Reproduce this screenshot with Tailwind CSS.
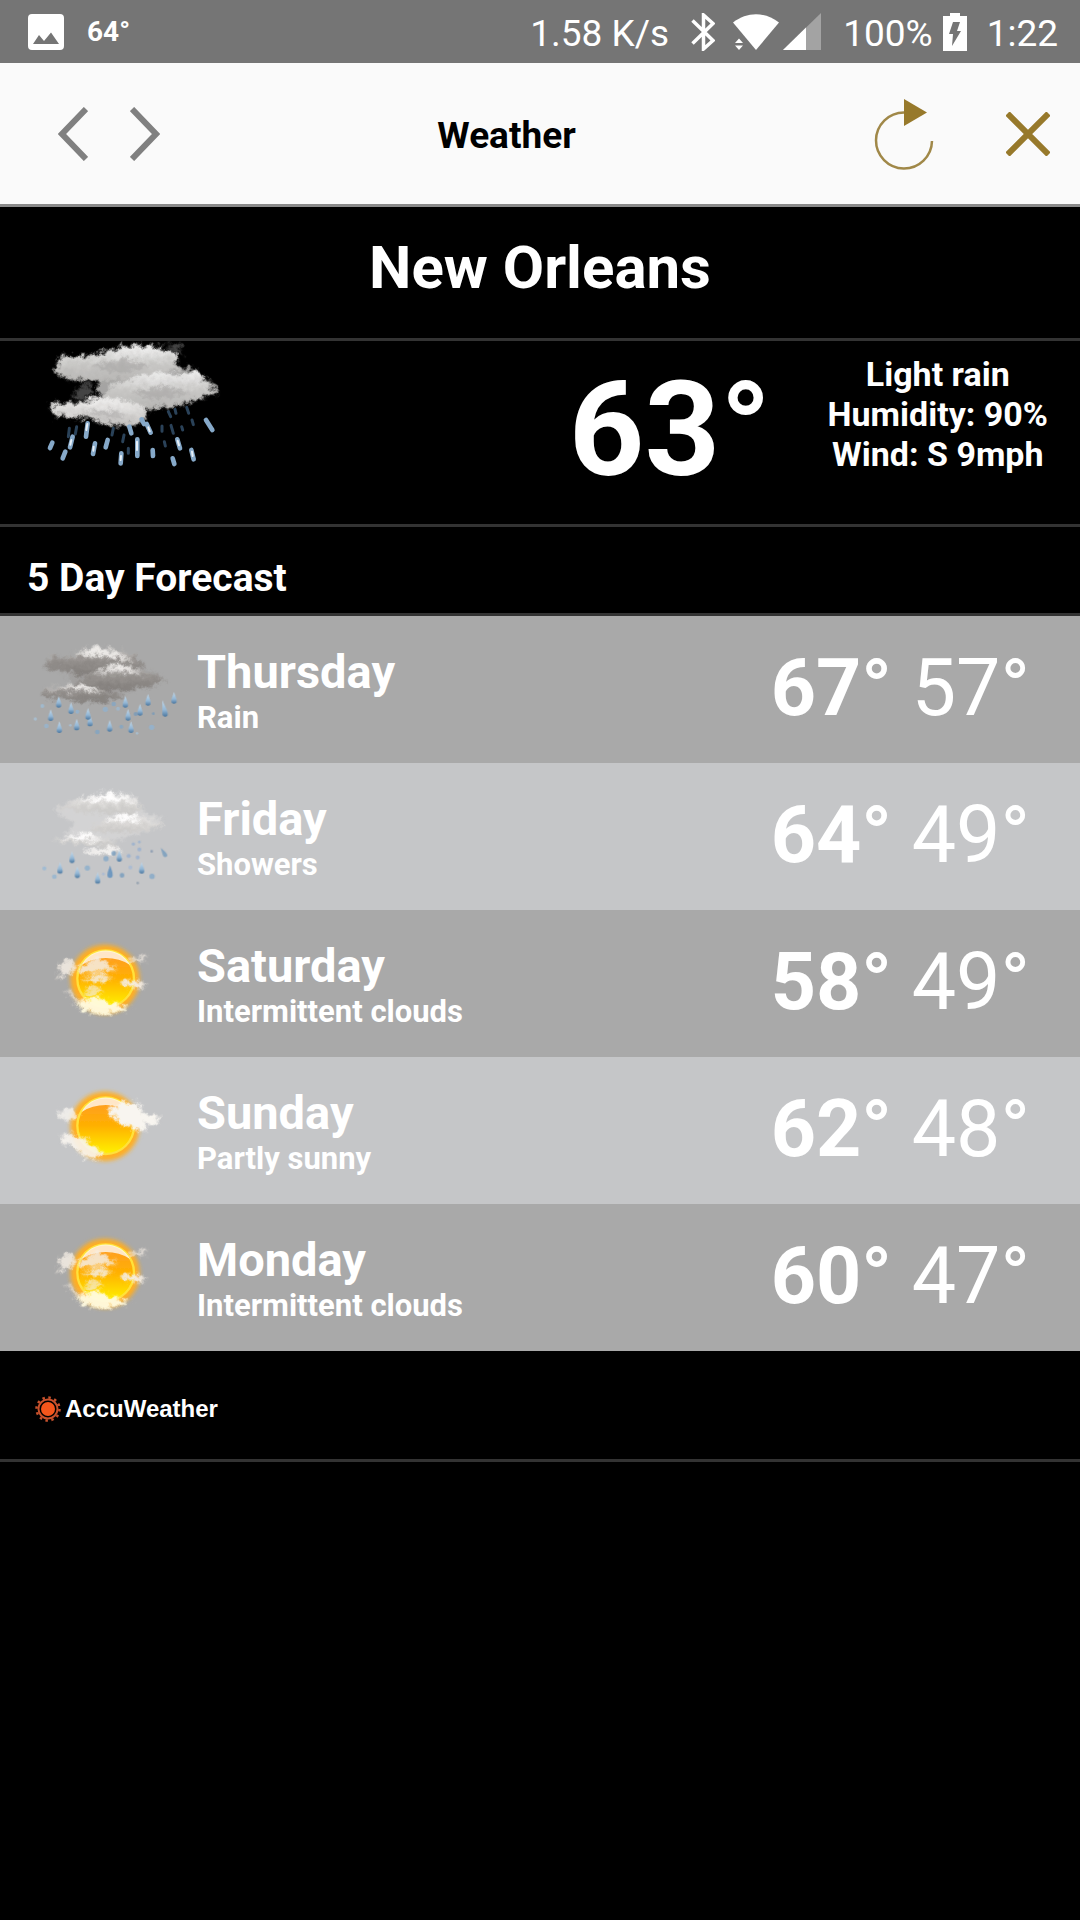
<!DOCTYPE html>
<html lang="en">
<head>
  <meta charset="UTF-8" />
  <meta name="viewport" content="width=device-width, initial-scale=1" />
  <title>Weather</title>
  <script src="https://cdn.jsdelivr.net/npm/@tailwindcss/browser@4"></script>
</head>
<body class="bg-black text-white font-[Roboto,sans-serif] min-h-screen">

  <!-- Shared weather icons -->
  <svg class="absolute w-0 h-0" aria-hidden="true">
    <defs>
      <filter id="wisp" x="-20%" y="-20%" width="140%" height="140%">
        <feTurbulence type="fractalNoise" baseFrequency="0.05" numOctaves="4" seed="4" result="n" />
        <feGaussianBlur in="SourceGraphic" stdDeviation="5" result="b" />
        <feDisplacementMap in="b" in2="n" scale="34" xChannelSelector="R" yChannelSelector="G" />
        <feGaussianBlur stdDeviation="2" />
      </filter>
      <filter id="soft" x="-20%" y="-20%" width="140%" height="140%"><feGaussianBlur stdDeviation="2" /></filter>
      <filter id="glow" x="-30%" y="-30%" width="160%" height="160%"><feGaussianBlur stdDeviation="7" /></filter>
      <linearGradient id="cloudLight" x1="0" y1="0" x2="0" y2="1">
        <stop offset="0" stop-color="#f4f4f4" /><stop offset="0.5" stop-color="#c9c8c6" /><stop offset="1" stop-color="#b4b3b1" />
      </linearGradient>
      <linearGradient id="cloudLow" x1="0" y1="0" x2="0" y2="1">
        <stop offset="0" stop-color="#f2f1f0" /><stop offset="1" stop-color="#bdbbb9" />
      </linearGradient>
      <linearGradient id="cloudGray" x1="0" y1="0" x2="0" y2="1">
        <stop offset="0" stop-color="#e2e0de" /><stop offset="0.45" stop-color="#979390" /><stop offset="1" stop-color="#7f7b78" />
      </linearGradient>
      <linearGradient id="cloudPale" x1="0" y1="0" x2="0" y2="1">
        <stop offset="0" stop-color="#f6f5f4" /><stop offset="0.6" stop-color="#d6d4d2" /><stop offset="1" stop-color="#c6c5c3" />
      </linearGradient>
      <linearGradient id="dropFill" x1="0" y1="0" x2="0" y2="1">
        <stop offset="0" stop-color="#c4dbed" /><stop offset="0.6" stop-color="#93b6d4" /><stop offset="1" stop-color="#4b779f" />
      </linearGradient>
      <linearGradient id="sunFill" x1="0" y1="0" x2="0" y2="1">
        <stop offset="0" stop-color="#ff9a2a" /><stop offset="0.5" stop-color="#ffb000" /><stop offset="1" stop-color="#fff200" />
      </linearGradient>
      <path id="drop" d="M0-18C3-8 8 2 8 9a8 8 0 0 1-16 0C-8 2-3-8 0-18Z" fill="url(#dropFill)" />

      <symbol id="rain" viewBox="75 48 480 441">
        <g filter="url(#wisp)">
          <path d="M135 205L150 168L205 175L270 148L340 150L395 170L425 200L480 225L500 245L440 262L330 285L230 290L200 220Z" fill="#9d9a97" opacity=".6" />
          <path d="M132 205L148 162L190 178L240 155L285 138L345 150L400 165L435 200L370 214L300 218L240 226L190 208Z" fill="url(#cloudGray)" />
          <path d="M225 248L290 210L360 192L420 210L500 240L450 260L390 268L330 272L260 266Z" fill="url(#cloudGray)" />
          <path d="M125 280L145 262L180 262L250 252L310 272L380 288L310 306L240 304L180 294L135 296Z" fill="url(#cloudGray)" />
          <path d="M225 165L285 143L350 158L400 185L300 165Z M290 216L360 196L420 220L350 212Z M170 268L250 254L310 278L240 268Z" fill="#f4f2f0" opacity=".85" />
        </g>
        <g filter="url(#soft)">
          <use href="#drop" x="176" y="306" /><use href="#drop" x="213" y="325" /><use href="#drop" x="152" y="346" />
          <use href="#drop" x="178" y="382" /><use href="#drop" x="230" y="374" /><use href="#drop" x="270" y="362" />
          <use href="#drop" x="264" y="342" /><use href="#drop" x="329" y="378" /><use href="#drop" x="376" y="306" />
          <use href="#drop" x="384" y="345" /><use href="#drop" x="393" y="382" /><use href="#drop" x="420" y="330" />
          <use href="#drop" x="444" y="300" /><use href="#drop" x="522" y="294" />
          <path d="M487 300C492 315 503 330 503 341a8 8 0 0 1-16 2Z" fill="url(#dropFill)" />
          <g opacity=".7">
            <circle cx="127" cy="318" r="6" fill="#9fc0dc" /><circle cx="106" cy="357" r="5" fill="#a9c6dd" /><circle cx="139" cy="378" r="7" fill="#94b8d6" />
            <circle cx="292" cy="396" r="7" fill="#7ba4c8" /><circle cx="316" cy="328" r="8" fill="#8fb3d2" /><circle cx="341" cy="312" r="7" fill="#7fa6c8" />
            <circle cx="354" cy="326" r="6" fill="#9cbbd5" /><circle cx="364" cy="380" r="6" fill="#7fa6c8" /><circle cx="407" cy="342" r="6" fill="#6f98bd" />
            <circle cx="455" cy="382" r="8" fill="#8fb6d8" /><circle cx="411" cy="400" r="4" fill="#a9c6dd" /><circle cx="460" cy="341" r="4" fill="#6f98bd" />
            <circle cx="232" cy="335" r="6" fill="#8fb6d8" /><circle cx="211" cy="376" r="4" fill="#a9c6dd" />
          </g>
        </g>
      </symbol>

      <symbol id="showers" viewBox="75 9 480 441">
        <g filter="url(#wisp)">
          <path d="M165 140L240 118L320 102L400 108L425 150L475 170L490 190L440 215L350 240L250 240L190 220L230 190L180 165Z" fill="#dad9d8" opacity=".7" />
          <path d="M170 145L230 120L290 104L340 98L400 108L425 145L400 162L320 160L240 154Z" fill="url(#cloudPale)" />
          <path d="M260 208L320 180L375 158L430 175L495 192L440 210L360 220Z" fill="url(#cloudPale)" />
          <path d="M152 244L210 228L250 216L310 234L365 257L300 260L230 250Z" fill="url(#cloudPale)" />
          <path d="M250 272L300 264L350 258L365 275L310 286L260 283Z" fill="#f2f0ee" />
          <path d="M240 122L330 102L400 122L320 122Z M310 188L375 162L430 184L370 180Z M190 236L250 220L310 242L250 236Z" fill="#fffefe" />
        </g>
        <g filter="url(#soft)">
          <use href="#drop" x="216" y="292" /><use href="#drop" x="180" y="324" /><use href="#drop" x="232" y="337" />
          <use href="#drop" x="293" y="354" /><use href="#drop" x="425" y="324" /><use href="#drop" x="358" y="288" />
          <path d="M330 316C334 328 338 335 338 345a8 9 0 0 1-16 0C322 335 327 328 330 316Z" fill="#6f98bf" />
          <g opacity=".75">
            <circle cx="133" cy="325" r="6" fill="#94b8d6" /><circle cx="163" cy="350" r="7" fill="#8fb3d2" /><circle cx="262" cy="324" r="8" fill="#86accd" />
            <circle cx="318" cy="296" r="8" fill="#7fa6c8" /><circle cx="341" cy="280" r="7" fill="#6f98bd" /><circle cx="366" cy="346" r="7" fill="#6f98bd" />
            <circle cx="386" cy="288" r="6" fill="#94aed0" /><circle cx="400" cy="252" r="5" fill="#94aed0" /><circle cx="418" cy="246" r="4" fill="#94aed0" />
            <circle cx="418" cy="268" r="6" fill="#94aed0" /><circle cx="413" cy="292" r="6" fill="#94aed0" /><circle cx="391" cy="322" r="6" fill="#a3b9d6" />
            <circle cx="455" cy="274" r="4" fill="#7f93ad" /><circle cx="456" cy="349" r="8" fill="#7fa6c8" /><circle cx="413" cy="369" r="4" fill="#8a99aa" />
            <path d="M482 264C490 270 502 280 502 287a7 7 0 0 1-13 0Z" fill="#6f98bd" /><circle cx="310" cy="342" r="4" fill="#a3b9d6" />
          </g>
        </g>
      </symbol>

      <symbol id="sun" viewBox="75 0 480 441">
        <circle cx="315" cy="208" r="104" fill="#ffae20" filter="url(#glow)" />
        <circle cx="317" cy="206" r="85" fill="url(#sunFill)" stroke="#ffe13a" stroke-width="7" filter="url(#soft)" />
        <path d="M245 165A82 82 0 0 1 390 165A110 84 0 0 0 245 165Z" fill="#fff" opacity=".75" filter="url(#soft)" />
      </symbol>

      <symbol id="intermittent" viewBox="75 0 480 441">
        <use href="#sun" x="75" y="0" width="480" height="441" />
        <g filter="url(#wisp)" fill="#f4ede4">
          <path d="M174 204L188 150L228 158L224 188L195 194Z" opacity=".85" />
          <path d="M235 168L290 145L325 155L352 185L300 180L270 194L240 190Z" opacity=".85" />
          <path d="M245 210L300 186L338 206L290 216Z" opacity=".85" />
          <path d="M240 248L290 228L312 242L270 256Z" opacity=".7" />
          <path d="M355 216L405 210L440 222L425 238L385 232Z" opacity=".95" />
          <path d="M390 145L440 134L435 156L400 156Z" opacity=".65" />
          <path d="M195 240L225 250L245 284L215 272Z" opacity=".55" />
          <path d="M230 280L290 258L330 278L392 292L350 310L290 312L250 302Z" fill="#fffbe0" opacity=".95" />
        </g>
      </symbol>

      <symbol id="partly" viewBox="75 -9 480 441">
        <use href="#sun" x="75" y="-9" width="480" height="441" />
        <g filter="url(#wisp)" fill="#f8f5f0">
          <path d="M322 148L365 130L412 124L428 158L474 168L478 190L436 192L436 218L400 204L365 194L345 178Z" />
          <path d="M176 152L215 146L236 165L210 184L182 176Z" opacity=".8" />
          <path d="M185 222L235 226L272 248L305 282L290 300L255 294L222 264L190 252Z" opacity=".9" />
        </g>
      </symbol>
    </defs>
  </svg>

  <!-- Status bar -->
  <div class="h-[63px] bg-[#757575] flex items-center justify-between pl-7 pr-[22px]">
    <div class="flex items-center gap-[23px]">
      <svg class="w-9 h-9" viewBox="0 0 36 36">
        <path fill="#fff" fill-rule="evenodd" d="M4 0h28a4 4 0 0 1 4 4v28a4 4 0 0 1-4 4H4a4 4 0 0 1-4-4V4a4 4 0 0 1 4-4ZM5 30h26L23 18.500l-7 8.500-5-6Z" />
      </svg>
      <span class="text-[28px] font-bold">64°</span>
    </div>
    <div class="flex items-center text-[37px] leading-[44px]">
      <span class="pt-1">1.58 K/s</span>
      <svg class="w-6 h-[38px] ml-[22px]" viewBox="0 0 24 38" fill="none" stroke="#fff" stroke-width="3.500">
        <path d="M1.500 7.500L22 27.500L12.500 36V2L22 10.500L1.500 30.500" />
      </svg>
      <svg class="w-[46px] h-9 ml-[18px]" viewBox="0 0 46 36" fill="#fff">
        <path d="M0 8.500C14-2.500 32-2.500 46 8.500L23 36Z" /><path d="M2 29l4-4.500 4 4.500ZM2 31.500h8L6 36Z" />
      </svg>
      <svg class="w-[38px] h-[37px] ml-1" viewBox="0 0 38 37">
        <path d="M38 0v37H0Z" fill="#a3a3a3" /><path d="M23 14.500V37H0Z" fill="#fff" />
      </svg>
      <span class="ml-[22px] pt-1">100%</span>
      <svg class="w-6 h-[38px] ml-[10px]" viewBox="0 0 24 38">
        <path d="M7 0h10v3h7v35H0V3h7Z" fill="#fff" /><path d="M10 9h7l-3 9h4L9 33l1-12H6Z" fill="#757575" />
      </svg>
      <span class="ml-5 pt-1">1:22</span>
    </div>
  </div>

  <!-- Title bar -->
  <header class="h-36 bg-[#fafafa] border-b-[3px] border-[#8a8a8a] flex items-center justify-between pl-[58px] pr-[30px] text-black">
    <nav class="flex gap-[42px]">
      <button type="button" aria-label="Back"><svg class="w-[30px] h-[54px]" viewBox="0 0 30 54" fill="none" stroke="#808080" stroke-width="6"><path d="M28 2L4 27L28 52" /></svg></button>
      <button type="button" aria-label="Forward"><svg class="w-[30px] h-[54px]" viewBox="0 0 30 54" fill="none" stroke="#808080" stroke-width="6"><path d="M2 2L26 27L2 52" /></svg></button>
    </nav>
    <h1 class="pt-[5px] text-[37px] leading-[44px] font-bold">Weather</h1>
    <div class="flex items-center gap-[51px]">
      <button type="button" aria-label="Refresh">
        <svg class="w-[102px] h-[72px]" viewBox="0 0 102 72"><path d="M51 14.500A28 28 0 1 0 79 43" fill="none" stroke="#a08848" stroke-width="2.500" /><path d="M51 1v27l23-13.500Z" fill="#97792b" /></svg>
      </button>
      <button type="button" aria-label="Close">
        <svg class="w-11 h-11" viewBox="0 0 44 44" stroke="#97792b" stroke-width="6"><path d="M1.500 1.500L42.500 42.500M42.500 1.500L1.500 42.500" /></svg>
      </button>
    </div>
  </header>

  <main>
    <h2 class="h-[134px] pb-[10px] border-b-[3px] border-[#333] flex items-center justify-center text-[60px] font-bold">New Orleans</h2>

    <!-- Current conditions -->
    <section class="h-[186px] border-b-[3px] border-[#333] flex items-start pl-7 pr-8 font-bold">
      <svg class="w-[210px] h-[150px]" viewBox="84 63 630 450" role="img" aria-label="Light rain">
        <g filter="url(#wisp)">
          <path d="M165 160L180 115L240 112L330 98L365 84L440 80L520 98L535 140L595 150L600 175L640 190L650 220L590 240L520 262L430 262L300 225L290 185L215 180Z" fill="#a5a4a3" />
          <path d="M162 160L185 108L260 108L330 94L365 80L440 76L525 95L540 150L480 160L400 175L300 187L220 178Z" fill="url(#cloudLight)" />
          <path d="M295 238L340 195L400 175L470 155L540 168L595 150L605 178L655 218L590 238L520 262L450 268L370 248Z" fill="url(#cloudLight)" />
          <path d="M152 252L220 250L290 232L370 240L435 262L440 300L380 320L330 316L260 294L158 286Z" fill="url(#cloudLow)" />
          <path d="M230 210L260 190L285 215L250 238L215 232Z M500 75L540 68L548 104L530 94Z" fill="#888" opacity=".5" />
          <path d="M270 140L380 112L450 140L360 160Z M390 215L500 195L570 218L470 240Z M240 275L340 270L380 290L320 295Z" fill="#8f8d8b" opacity=".35" />
        </g>
        <g fill="none" stroke-linecap="round" stroke="#36536f" stroke-width="9" opacity=".8" filter="url(#soft)">
          <path d="M208 325L205 350M230 320L226 342M340 325L336 345M372 345L368 365M486 318L486 334M513 316L520 340M545 320L548 330M576 300L580 314M505 275L512 290M385 385L385 400M493 365L496 378M560 262L566 280M525 268L528 280" />
        </g>
        <g fill="none" stroke-linecap="round" stroke="#86a9c9" stroke-width="14" filter="url(#soft)">
          <path d="M263 310L258 350M218 350L210 382M157 368L150 384M196 395L188 415M285 370L279 402M323 360L317 382M364 400L362 430M412 358L412 408M388 320L394 340M425 298L432 312M440 312L452 338M458 390L459 408M532 358L540 385M574 390L581 418M618 300L637 330M518 415L523 432" />
        </g>
        <g fill="none" stroke-linecap="round" stroke="#e8f0f7" stroke-width="6" filter="url(#soft)">
          <path d="M262 312L259 330M214 360L211 374M411 365L411 390M445 322L449 334M533 362L537 376M576 395L578 408M363 408L362 420M281 380L280 392" />
        </g>
      </svg>
      <p class="ml-auto pt-[9px] text-[132px] leading-[160px]">63°</p>
      <div class="ml-14 pt-[13px] text-[34px] leading-[40px] text-center">
        <p>Light rain</p>
        <p>Humidity: 90%</p>
        <p>Wind: S 9mph</p>
      </div>
    </section>

    <h3 class="h-[89px] pt-4 pl-[27px] border-b-[3px] border-[#333] flex items-center text-[39px] font-bold">5 Day Forecast</h3>

    <!-- Forecast rows -->
    <ul>
      <li class="h-[147px] bg-[#a9a9a9] flex items-center pl-[25px] pr-[50px]">
        <svg class="w-40 h-[147px]" aria-hidden="true"><use href="#rain" /></svg>
        <div class="ml-3 font-bold">
          <p class="text-[47px] leading-[56px]">Thursday</p>
          <p class="text-[31px] leading-[36px]">Rain</p>
        </div>
        <p class="ml-auto pb-1 text-[79px] leading-[96px]"><strong class="font-bold">67°</strong> 57°</p>
      </li>
      <li class="h-[147px] bg-[#c5c6c8] flex items-center pl-[25px] pr-[50px]">
        <svg class="w-40 h-[147px]" aria-hidden="true"><use href="#showers" /></svg>
        <div class="ml-3 font-bold">
          <p class="text-[47px] leading-[56px]">Friday</p>
          <p class="text-[31px] leading-[36px]">Showers</p>
        </div>
        <p class="ml-auto pb-1 text-[79px] leading-[96px]"><strong class="font-bold">64°</strong> 49°</p>
      </li>
      <li class="h-[147px] bg-[#a9a9a9] flex items-center pl-[25px] pr-[50px]">
        <svg class="w-40 h-[147px]" aria-hidden="true"><use href="#intermittent" /></svg>
        <div class="ml-3 font-bold">
          <p class="text-[47px] leading-[56px]">Saturday</p>
          <p class="text-[31px] leading-[36px]">Intermittent clouds</p>
        </div>
        <p class="ml-auto pb-1 text-[79px] leading-[96px]"><strong class="font-bold">58°</strong> 49°</p>
      </li>
      <li class="h-[147px] bg-[#c5c6c8] flex items-center pl-[25px] pr-[50px]">
        <svg class="w-40 h-[147px]" aria-hidden="true"><use href="#partly" /></svg>
        <div class="ml-3 font-bold">
          <p class="text-[47px] leading-[56px]">Sunday</p>
          <p class="text-[31px] leading-[36px]">Partly sunny</p>
        </div>
        <p class="ml-auto pb-1 text-[79px] leading-[96px]"><strong class="font-bold">62°</strong> 48°</p>
      </li>
      <li class="h-[147px] bg-[#a9a9a9] flex items-center pl-[25px] pr-[50px]">
        <svg class="w-40 h-[147px]" aria-hidden="true"><use href="#intermittent" /></svg>
        <div class="ml-3 font-bold">
          <p class="text-[47px] leading-[56px]">Monday</p>
          <p class="text-[31px] leading-[36px]">Intermittent clouds</p>
        </div>
        <p class="ml-auto pb-1 text-[79px] leading-[96px]"><strong class="font-bold">60°</strong> 47°</p>
      </li>
    </ul>
  </main>

  <footer class="h-[111px] pt-2 border-b-[3px] border-[#333] flex items-center gap-1 pl-[35px]">
    <svg class="w-[26px] h-[26px]" viewBox="-13 -13 26 26">
      <circle r="11.500" fill="none" stroke="#c8512c" stroke-width="2.500" stroke-dasharray="2.500 3.520" />
      <circle r="9.500" fill="none" stroke="#c8512c" stroke-width="2" />
      <circle r="7" fill="#f4561c" />
    </svg>
    <span class="font-['Liberation_Sans',Arial,sans-serif] text-[24px] leading-[30px] font-bold">AccuWeather</span>
  </footer>
</body>
</html>
